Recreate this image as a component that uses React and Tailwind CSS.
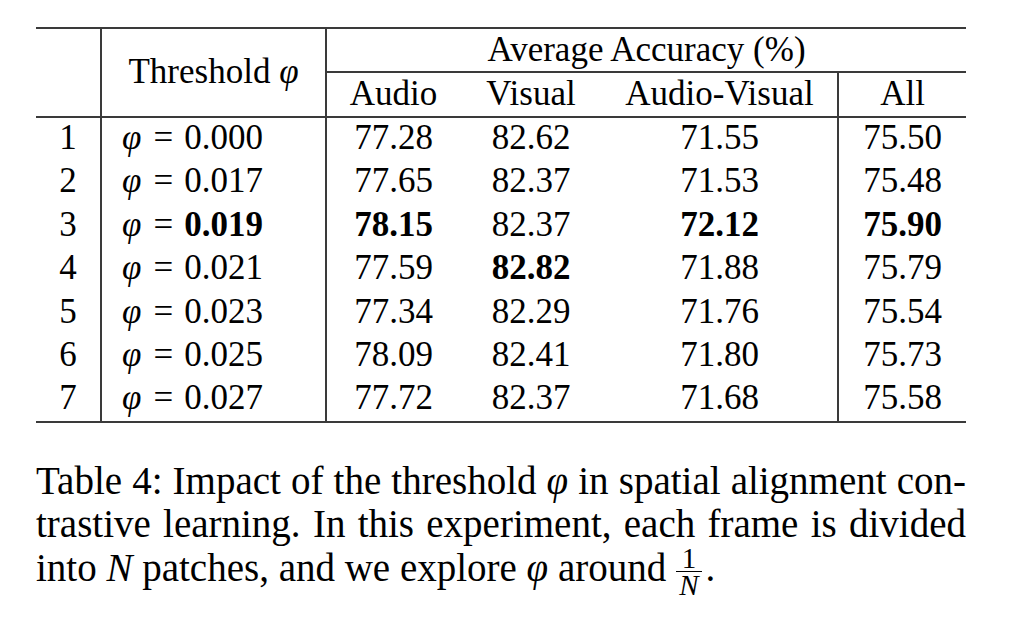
const rows = [
  { n: 1, t: '0.000', a: '77.28', v: '82.62', av: '71.55', all: '75.50' },
  { n: 2, t: '0.017', a: '77.65', v: '82.37', av: '71.53', all: '75.48' },
  { n: 3, t: '0.019', a: '78.15', v: '82.37', av: '72.12', all: '75.90', bold: ['t', 'a', 'av', 'all'] },
  { n: 4, t: '0.021', a: '77.59', v: '82.82', av: '71.88', all: '75.79', bold: ['v'] },
  { n: 5, t: '0.023', a: '77.34', v: '82.29', av: '71.76', all: '75.54' },
  { n: 6, t: '0.025', a: '78.09', v: '82.41', av: '71.80', all: '75.73' },
  { n: 7, t: '0.027', a: '77.72', v: '82.37', av: '71.68', all: '75.58' },
]

function Phi() {
  return <i className="italic">φ</i>
}

function Frac() {
  return (
    <span className="inline-flex flex-col items-center align-middle text-[29px] leading-[23px] ml-[10px] mr-[4px]">
      <span className="px-[3px] pb-[1px]">1</span>
      <span className="px-[3px] pt-[2px] border-t border-black italic">N</span>
    </span>
  )
}

export default function App() {
  const line = 'border-[#3a3a3a]'
  return (
    <div className="w-[1024px] h-[617px] bg-white text-black overflow-hidden font-[Liberation_Serif]">
      <div className="ml-[36px] pt-[27px] w-[930px]">
        <table className="w-[930px] table-fixed border-collapse text-[35px] leading-none">
          <colgroup>
            <col className="w-[65px]" />
            <col className="w-[225px]" />
            <col className="w-[134px]" />
            <col className="w-[142px]" />
            <col className="w-[236px]" />
            <col className="w-[128px]" />
          </colgroup>
          <thead>
            <tr className={`h-[44px] border-t-2 ${line}`}>
              <th rowSpan={2} className={`p-0 border-r-2 border-b-2 ${line}`}></th>
              <th rowSpan={2} className={`p-0 pb-[2px] font-normal text-center border-r-2 border-b-2 ${line}`}>
                Threshold <Phi />
              </th>
              <th colSpan={4} className={`p-0 pb-[2px] font-normal text-center border-b-2 ${line}`}>
                Average Accuracy (%)
              </th>
            </tr>
            <tr className="h-[45px]">
              <th className={`p-0 pb-[3px] font-normal border-b-2 ${line}`}>Audio</th>
              <th className={`p-0 pb-[3px] font-normal border-b-2 ${line}`}>Visual</th>
              <th className={`p-0 pb-[3px] font-normal border-b-2 ${line}`}>Audio-Visual</th>
              <th className={`p-0 pb-[3px] font-normal border-b-2 border-l-2 ${line}`}>All</th>
            </tr>
          </thead>
          <tbody>
            {rows.map((r, i) => {
              const b = (k) => (r.bold && r.bold.includes(k) ? 'font-bold' : '')
              const last = i === rows.length - 1 ? `border-b-2 ${line}` : ''
              return (
                <tr key={r.n} className={`h-[43.5px] ${last}`}>
                  <td className={`p-0 pb-[3px] text-center border-r-2 ${line}`}>{r.n}</td>
                  <td className={`p-0 pb-[3px] pl-[20px] text-left border-r-2 ${line}`}>
                    <Phi />
                    <span className="ml-[12px] mr-[11px]">=</span>
                    <span className={b('t')}>{r.t}</span>
                  </td>
                  <td className={`p-0 pb-[3px] text-center ${b('a')}`}>{r.a}</td>
                  <td className={`p-0 pb-[3px] text-center ${b('v')}`}>{r.v}</td>
                  <td className={`p-0 pb-[3px] text-center ${b('av')}`}>{r.av}</td>
                  <td className={`p-0 pb-[3px] text-center border-l-2 ${line} ${b('all')}`}>{r.all}</td>
                </tr>
              )
            })}
          </tbody>
        </table>

        <div className="mt-[36px] text-[39px] leading-[43.5px]">
          <p className="text-justify [text-align-last:justify]">
            Table 4: Impact of the threshold <Phi /> in spatial alignment con-
          </p>
          <p className="text-justify [text-align-last:justify]">
            trastive learning. In this experiment, each frame is divided
          </p>
          <p>
            into <i>N</i> patches, and we explore <Phi /> around
            <Frac />.
          </p>
        </div>
      </div>
    </div>
  )
}
